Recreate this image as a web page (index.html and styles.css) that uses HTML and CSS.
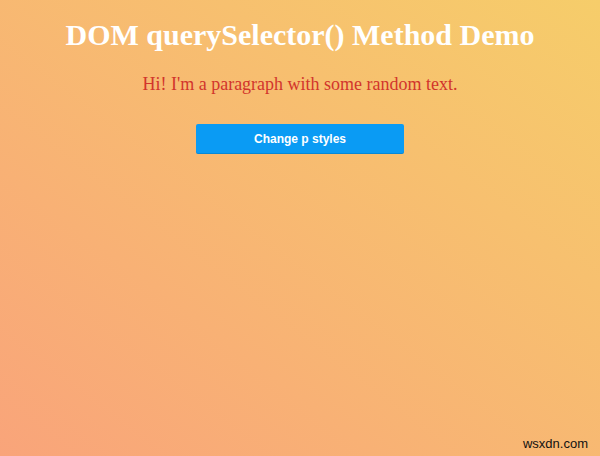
FILE: index.html
```html
<!DOCTYPE html>
<html>
<head>
<meta charset="utf-8">
<link rel="stylesheet" href="styles.css">
</head>
<body>
<main class="page">
  <h1 class="title">DOM querySelector() Method Demo</h1>
  <p class="sample">Hi! I'm a paragraph with some random text.</p>
  <button class="btn">Change p styles</button>
</main>
<span class="mark">wsxdn.com</span>
</body>
</html>
```
FILE: styles.css
```css
html, body {
  margin: 0;
  height: 100%;
}
body {
  background: linear-gradient(to top right, #f9a47a 0%, #f6cd6a 100%);
  font-family: "Liberation Serif", "Times New Roman", serif;
}
.page {
  display: flex;
  flex-direction: column;
  align-items: center;
  padding-top: 19px;
}
.title {
  margin: 0;
  color: #fff;
  font-size: 30px;
  font-weight: bold;
  line-height: 32px;
}
.sample {
  margin: 21px 0 0;
  color: #d2352c;
  font-size: 18px;
  line-height: 24px;
}
.btn {
  margin-top: 28px;
  width: 208px;
  height: 30px;
  border: none;
  border-radius: 2px;
  background: #0a9bf4;
  box-shadow: inset 0 -1px 0 rgba(0, 0, 0, 0.12);
  color: #fff;
  font-family: "Liberation Sans", Arial, sans-serif;
  font-weight: bold;
  font-size: 12px;
}
.mark {
  position: absolute;
  right: 12px;
  bottom: 5px;
  font-family: "Liberation Sans", Arial, sans-serif;
  font-size: 13px;
  color: #111;
}
```
